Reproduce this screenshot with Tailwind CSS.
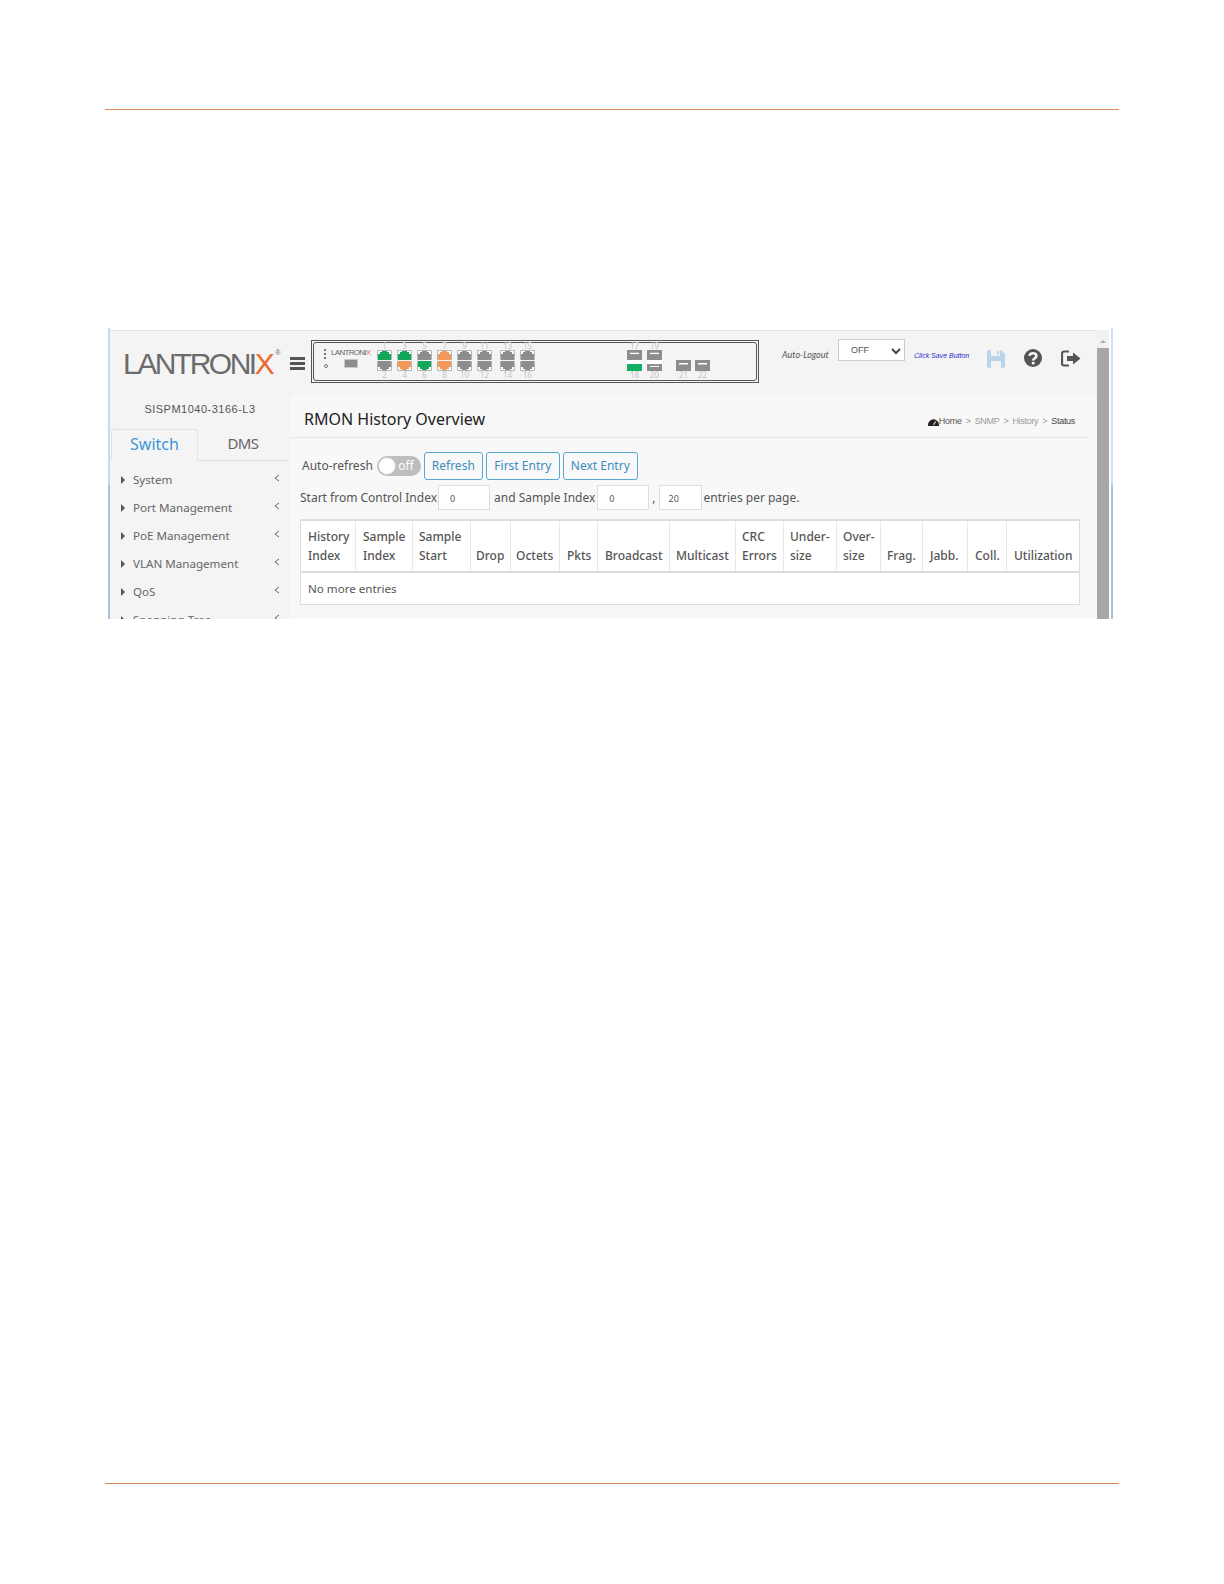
<!DOCTYPE html>
<html lang="en">
<head>
    <meta charset="UTF-8">
    <title>RMON History Overview</title>
    <script src="https://cdn.jsdelivr.net/npm/@tailwindcss/browser@4"></script>
</head>
<body class="bg-white font-['Noto_Sans',sans-serif] text-[#555]">
    <svg class="hidden">
        <symbol id="port-up" viewBox="0 0 15 10" preserveAspectRatio="none"><path fill="#fff" stroke="#b5b5b5" d="M.5.5h14v9H.5z"/><path fill="currentColor" d="M1 10V4h2V2h2V1h5v1h2v2h2v6z"/></symbol>
        <symbol id="port-down" viewBox="0 0 15 10" preserveAspectRatio="none"><path fill="#fff" stroke="#b5b5b5" d="M.5.5h14v9H.5z"/><path fill="currentColor" d="M1 0v6h2v2h2v1h5V8h2V6h2V0z"/></symbol>
        <symbol id="sfp" viewBox="0 0 15 11" preserveAspectRatio="none"><path fill="currentColor" d="M0 0h15v11H0z"/><path fill="#fff" d="M3 3h9v1.500H3z"/></symbol>
    </svg>

    <div class="w-[1224px] h-[1584px] flex flex-col">
        <div class="mt-[109px] mx-[105px] h-px bg-[#d98a5b]"></div>

        <div class="mt-[218px] ml-[108px] w-[1005px] h-[291px] flex overflow-hidden bg-white">
            <div class="w-[2px] flex flex-col shrink-0">
                <div class="h-[157px] bg-[#c9d8ea]"></div>
                <div class="flex-1 bg-[#a9c1e4]"></div>
            </div>

            <div class="flex-1 mt-[2px] border-t border-[#e6e6e6] bg-[#f4f4f4] flex flex-col min-w-0">
                <header class="h-[65px] shrink-0 flex items-start">
                    <div class="w-[180px] pl-[13px] pt-[15px] flex items-start shrink-0 text-[#6a6b6d] font-['Liberation_Sans',sans-serif] text-[30px] leading-[36px] tracking-[-2.500px]">
                        <span>LANTRONI</span><span class="text-[#ea6a2c]">X</span><span class="ml-[3px] text-[7px] leading-[14px] tracking-normal">®</span>
                    </div>
                    <div class="w-[21px] pt-[26px] shrink-0">
                        <div class="w-[15px] flex flex-col gap-[2px]">
                            <div class="h-[3px] bg-[#555]"></div>
                            <div class="h-[3px] bg-[#555]"></div>
                            <div class="h-[3px] bg-[#555]"></div>
                        </div>
                    </div>
                    <div class="mt-[9px] w-[448px] h-[43px] shrink-0 border border-[#555] p-px">
                        <div class="h-full pb-[2px] border border-[#555] rounded-[3px] flex items-center text-[8px] leading-[8px] text-[#c4c4c4] text-center">
                            <div class="ml-[10px] w-[44px] h-[28px] flex gap-[3px] shrink-0">
                                <div class="pt-[2px] flex flex-col gap-[2px]">
                                    <i class="block w-[2px] h-[2px] bg-[#777]"></i>
                                    <i class="block w-[2px] h-[2px] bg-[#777]"></i>
                                    <i class="block w-[2px] h-[2px] bg-[#777]"></i>
                                    <i class="block w-[4px] h-[4px] rounded-full border border-[#777] mt-[3px]"></i>
                                </div>
                                <div class="flex flex-col items-center">
                                    <div class="font-['Liberation_Sans',sans-serif] text-[8px] leading-[11px] tracking-[-0.7px] text-[#666]">LANTRONI<span class="text-[#ea6a2c]">X</span></div>
                                    <div class="w-[14px] h-[9px] mt-[1px] bg-[#8d8d8d] border border-[#c8c8c8]"></div>
                                </div>
                            </div>
                            <div class="ml-[9px] flex gap-[5px] shrink-0">
                                <div class="w-[15px]">1<svg class="block w-[15px] h-[10px] text-[#12a75b]"><use href="#port-up"/></svg><svg class="block w-[15px] h-[10px] mt-px text-[#8d8d8d]"><use href="#port-down"/></svg>2</div>
                                <div class="w-[15px]">3<svg class="block w-[15px] h-[10px] text-[#12a75b]"><use href="#port-up"/></svg><svg class="block w-[15px] h-[10px] mt-px text-[#f39a5b]"><use href="#port-down"/></svg>4</div>
                                <div class="w-[15px]">5<svg class="block w-[15px] h-[10px] text-[#8d8d8d]"><use href="#port-up"/></svg><svg class="block w-[15px] h-[10px] mt-px text-[#12a75b]"><use href="#port-down"/></svg>6</div>
                                <div class="w-[15px]">7<svg class="block w-[15px] h-[10px] text-[#f39a5b]"><use href="#port-up"/></svg><svg class="block w-[15px] h-[10px] mt-px text-[#f39a5b]"><use href="#port-down"/></svg>8</div>
                                <div class="w-[15px]">9<svg class="block w-[15px] h-[10px] text-[#8d8d8d]"><use href="#port-up"/></svg><svg class="block w-[15px] h-[10px] mt-px text-[#8d8d8d]"><use href="#port-down"/></svg>10</div>
                                <div class="w-[15px]">11<svg class="block w-[15px] h-[10px] text-[#8d8d8d]"><use href="#port-up"/></svg><svg class="block w-[15px] h-[10px] mt-px text-[#8d8d8d]"><use href="#port-down"/></svg>12</div>
                                <div class="w-[15px] ml-[3px]">13<svg class="block w-[15px] h-[10px] text-[#8d8d8d]"><use href="#port-up"/></svg><svg class="block w-[15px] h-[10px] mt-px text-[#8d8d8d]"><use href="#port-down"/></svg>14</div>
                                <div class="w-[15px]">15<svg class="block w-[15px] h-[10px] text-[#8d8d8d]"><use href="#port-up"/></svg><svg class="block w-[15px] h-[10px] mt-px text-[#8d8d8d]"><use href="#port-down"/></svg>16</div>
                            </div>
                            <div class="ml-[92px] flex gap-[5px] shrink-0">
                                <div class="w-[15px]">17<svg class="block w-[15px] h-[10px] text-[#8d8d8d]"><use href="#sfp"/></svg><div class="h-[4px] bg-white"></div><div class="h-[7px] bg-[#12b062]"></div>18</div>
                                <div class="w-[15px]">19<svg class="block w-[15px] h-[10px] text-[#8d8d8d]"><use href="#sfp"/></svg><div class="h-[4px] bg-white"></div><svg class="block w-[15px] h-[7px] text-[#8d8d8d]"><use href="#sfp"/></svg>20</div>
                            </div>
                            <div class="ml-[14px] flex gap-[4px] shrink-0">
                                <div class="w-[15px] pt-[18px]"><svg class="block w-[15px] h-[11px] text-[#8d8d8d]"><use href="#sfp"/></svg>21</div>
                                <div class="w-[15px] pt-[18px]"><svg class="block w-[15px] h-[11px] text-[#8d8d8d]"><use href="#sfp"/></svg>22</div>
                            </div>
                        </div>
                    </div>
                    <div class="ml-[23px] pt-[18px] w-[56px] shrink-0 italic text-[9px] leading-[12px] text-[#555] font-['Lato',sans-serif]">Auto-Logout</div>
                    <div class="mt-[8px] w-[67px] h-[22px] shrink-0 border border-[#ccc] bg-white flex items-center justify-between pl-[12px] pr-[3px] pt-[2px] text-[9px] font-['Liberation_Sans',sans-serif] text-[#555]">
                        <span>OFF</span>
                        <svg class="w-[10px] h-[7px]" viewBox="0 0 10 7" fill="none" stroke="#444" stroke-width="2"><path d="M1 1l4 4 4-4"/></svg>
                    </div>
                    <div class="ml-[9px] pt-[20px] w-[73px] shrink-0 italic text-[7px] leading-[10px] text-[#1f2bd0] font-['Liberation_Sans',sans-serif]">Click Save Button</div>
                    <svg class="mt-[19px] w-[18px] h-[18px] shrink-0" viewBox="0 0 18 18"><path fill="#b9d5ee" d="M0 1.500A1.500 1.500 0 0 1 1.500 0H4v6h9V0h1l4 4v12.500a1.500 1.500 0 0 1-1.500 1.500H14v-7H4v7H1.500A1.500 1.500 0 0 1 0 16.500zM10 1h2v4h-2z"/></svg>
                    <svg class="ml-[19px] mt-[18px] w-[18px] h-[18px] shrink-0" viewBox="0 0 18 18"><circle cx="9" cy="9" r="9" fill="#555"/><path fill="none" stroke="#f4f4f4" stroke-width="2.600" d="M5.600 6.800c.3-3.500 6.800-3.400 6.800.2 0 2.400-3.200 2.200-3.200 4.400"/><path fill="#f4f4f4" d="M7.800 12.800h2.800v2.600H7.800z"/></svg>
                    <svg class="ml-[19px] mt-[19px] w-[20px] h-[17px] shrink-0" viewBox="0 0 20 17"><path fill="none" stroke="#555" stroke-width="2.200" d="M8 1.500H3a2 2 0 0 0-2 2v10a2 2 0 0 0 2 2h5"/><path fill="#555" d="M6 6h6V2.500L19.500 8.500 12 14.500V11H6z"/></svg>
                </header>

                <div class="flex-1 flex min-h-0">
                    <aside class="w-[180px] shrink-0">
                        <div class="pt-[5px] text-center text-[11px] leading-[16px] tracking-[0.5px] text-[#555] font-['Liberation_Sans',sans-serif]">SISPM1040-3166-L3</div>
                        <div class="mt-[12px] h-[32px] flex">
                            <div class="ml-[1px] w-[87px] border border-b-0 border-[#e2e2e2] rounded-t-[3px] text-center text-[16px] leading-[29px] text-[#3f94d6]">Switch</div>
                            <div class="flex-1 mr-[2px] border-b border-[#dcdcdc] text-center text-[15px] leading-[29px] tracking-[-0.6px] text-[#666]">DMS</div>
                        </div>
                        <nav class="pt-[5px] text-[11.6px] leading-[28px] text-[#666]">
                            <div class="flex items-center h-[28px] pl-[11px] pr-[10px]"><span class="border-y-[4px] border-l-[4px] border-y-transparent border-l-[#555]"></span><span class="ml-[8px] flex-1">System</span><svg class="w-[6px] h-[8px] -mt-[5px]" viewBox="0 0 6 8" fill="none" stroke="#666"><path d="M5 1L1 4l4 3"/></svg></div>
                            <div class="flex items-center h-[28px] pl-[11px] pr-[10px]"><span class="border-y-[4px] border-l-[4px] border-y-transparent border-l-[#555]"></span><span class="ml-[8px] flex-1">Port Management</span><svg class="w-[6px] h-[8px] -mt-[5px]" viewBox="0 0 6 8" fill="none" stroke="#666"><path d="M5 1L1 4l4 3"/></svg></div>
                            <div class="flex items-center h-[28px] pl-[11px] pr-[10px]"><span class="border-y-[4px] border-l-[4px] border-y-transparent border-l-[#555]"></span><span class="ml-[8px] flex-1">PoE Management</span><svg class="w-[6px] h-[8px] -mt-[5px]" viewBox="0 0 6 8" fill="none" stroke="#666"><path d="M5 1L1 4l4 3"/></svg></div>
                            <div class="flex items-center h-[28px] pl-[11px] pr-[10px]"><span class="border-y-[4px] border-l-[4px] border-y-transparent border-l-[#555]"></span><span class="ml-[8px] flex-1">VLAN Management</span><svg class="w-[6px] h-[8px] -mt-[5px]" viewBox="0 0 6 8" fill="none" stroke="#666"><path d="M5 1L1 4l4 3"/></svg></div>
                            <div class="flex items-center h-[28px] pl-[11px] pr-[10px]"><span class="border-y-[4px] border-l-[4px] border-y-transparent border-l-[#555]"></span><span class="ml-[8px] flex-1">QoS</span><svg class="w-[6px] h-[8px] -mt-[5px]" viewBox="0 0 6 8" fill="none" stroke="#666"><path d="M5 1L1 4l4 3"/></svg></div>
                            <div class="flex items-center h-[28px] pl-[11px] pr-[10px]"><span class="border-y-[4px] border-l-[4px] border-y-transparent border-l-[#555]"></span><span class="ml-[8px] flex-1">Spanning Tree</span><svg class="w-[6px] h-[8px] -mt-[5px]" viewBox="0 0 6 8" fill="none" stroke="#666"><path d="M5 1L1 4l4 3"/></svg></div>
                        </nav>
                    </aside>

                    <main class="flex-1 min-w-0 bg-[#f8f8f8] rounded-tl-[4px]">
                        <div class="mr-[8px] h-[42px] border-b border-[#e6e6e6] flex items-center justify-between pl-[14px] pr-[14px] pt-[4px]">
                            <h1 class="text-[16px] text-[#222]">RMON History Overview</h1>
                            <div class="mt-[6px] flex items-center gap-[4px] text-[9px] tracking-[-0.3px] font-['Liberation_Sans',sans-serif] text-[#999]">
                                <span class="flex items-center text-[#555]"><svg class="w-[11px] h-[9px]" viewBox="0 0 10 8"><path fill="#222" d="M0 7a5 5 0 0 1 10 0v1H0z"/><path stroke="#eee" d="M5 7l2-3"/></svg>Home</span>
                                <span>&gt;</span><span>SNMP</span><span>&gt;</span><span>History</span><span>&gt;</span><span class="text-[#444]">Status</span>
                            </div>
                        </div>

                        <div class="pl-[12px] mt-[14px] h-[28px] flex items-center gap-[3px] text-[12px] text-[#555]">
                            <span>Auto-refresh</span>
                            <div class="ml-[1px] w-[44px] h-[20px] rounded-full bg-[#bdbdbd] flex items-center justify-between p-px pr-[7px] text-white">
                                <span class="w-[18px] h-[18px] rounded-full bg-white border border-[#ccc]"></span>
                                <span>off</span>
                            </div>
                            <button class="w-[59px] h-[28px] border border-[#58a9cf] rounded-[3px] text-[#3c8dbc]">Refresh</button>
                            <button class="w-[74px] h-[28px] border border-[#58a9cf] rounded-[3px] text-[#3c8dbc]">First Entry</button>
                            <button class="w-[75px] h-[28px] border border-[#58a9cf] rounded-[3px] text-[#3c8dbc]">Next Entry</button>
                        </div>

                        <div class="pl-[10px] mt-[5px] h-[25px] flex items-center text-[12px] text-[#555]">
                            <span>Start from Control Index</span>
                            <input value="0" class="ml-[1px] w-[52px] h-[25px] border border-[#ddd] bg-white pl-[11px] pt-[2px] text-[9px]">
                            <span class="ml-[4px]">and Sample Index</span>
                            <input value="0" class="ml-[2px] w-[52px] h-[25px] border border-[#ddd] bg-white pl-[11px] pt-[2px] text-[9px]">
                            <span class="ml-[3px]">,</span>
                            <input value="20" class="ml-[3px] w-[43px] h-[25px] border border-[#ddd] bg-white pl-[9px] pt-[2px] text-[9px]">
                            <span class="ml-[2px]">entries per page.</span>
                        </div>

                        <table class="ml-[10px] mt-[9px] w-[780px] table-fixed border-collapse bg-white text-[12px] leading-[19px] text-[#555] border border-[#dcdcdc]">
                            <thead class="border-t-2 border-b-2 border-[#dcdcdc]">
                                <tr class="h-[52px] align-bottom text-left">
                                    <th class="w-[55px] pl-[7px] pb-[6px] font-medium border-r border-[#e8e8e8]">History<br>Index</th>
                                    <th class="w-[57px] pl-[7px] pb-[6px] font-medium border-r border-[#e8e8e8]">Sample<br>Index</th>
                                    <th class="w-[58px] pl-[6px] pb-[6px] font-medium border-r border-[#e8e8e8]">Sample<br>Start</th>
                                    <th class="w-[40px] pl-[5px] pb-[6px] font-medium border-r border-[#e8e8e8]">Drop</th>
                                    <th class="w-[49px] pl-[5px] pb-[6px] font-medium border-r border-[#e8e8e8]">Octets</th>
                                    <th class="w-[38px] pl-[7px] pb-[6px] font-medium border-r border-[#e8e8e8]">Pkts</th>
                                    <th class="w-[72px] pl-[7px] pb-[6px] font-medium border-r border-[#e8e8e8]">Broadcast</th>
                                    <th class="w-[66px] pl-[6px] pb-[6px] font-medium border-r border-[#e8e8e8]">Multicast</th>
                                    <th class="w-[48px] pl-[6px] pb-[6px] font-medium border-r border-[#e8e8e8]">CRC<br>Errors</th>
                                    <th class="w-[53px] pl-[6px] pb-[6px] font-medium border-r border-[#e8e8e8]">Under-<br>size</th>
                                    <th class="w-[44px] pl-[6px] pb-[6px] font-medium border-r border-[#e8e8e8]">Over-<br>size</th>
                                    <th class="w-[42px] pl-[6px] pb-[6px] font-medium border-r border-[#e8e8e8]">Frag.</th>
                                    <th class="w-[45px] pl-[7px] pb-[6px] font-medium border-r border-[#e8e8e8]">Jabb.</th>
                                    <th class="w-[39px] pl-[7px] pb-[6px] font-medium border-r border-[#e8e8e8]">Coll.</th>
                                    <th class="w-[73px] pl-[7px] pb-[6px] font-medium">Utilization</th>
                                </tr>
                            </thead>
                            <tbody>
                                <tr class="h-[32px]"><td colspan="15" class="pl-[7px] text-[11.6px]">No more entries</td></tr>
                            </tbody>
                        </table>
                    </main>
                </div>
            </div>

            <div class="w-[12px] shrink-0 mt-[2px] bg-[#f1f1f1] flex flex-col items-center">
                <div class="mt-[10px] mb-[5px] border-x-[3px] border-b-[3px] border-x-transparent border-b-[#aaa]"></div>
                <div class="w-full flex-1 bg-[#a8a6a6]"></div>
            </div>
            <div class="w-[4px] shrink-0 pl-[2px] flex flex-col">
                <div class="h-[157px] bg-[#cfdff0]"></div>
                <div class="flex-1 bg-[#a9c1e4]"></div>
            </div>
        </div>

        <div class="mt-[864px] mx-[105px] h-px bg-[#d98a5b]"></div>
    </div>
</body>
</html>
